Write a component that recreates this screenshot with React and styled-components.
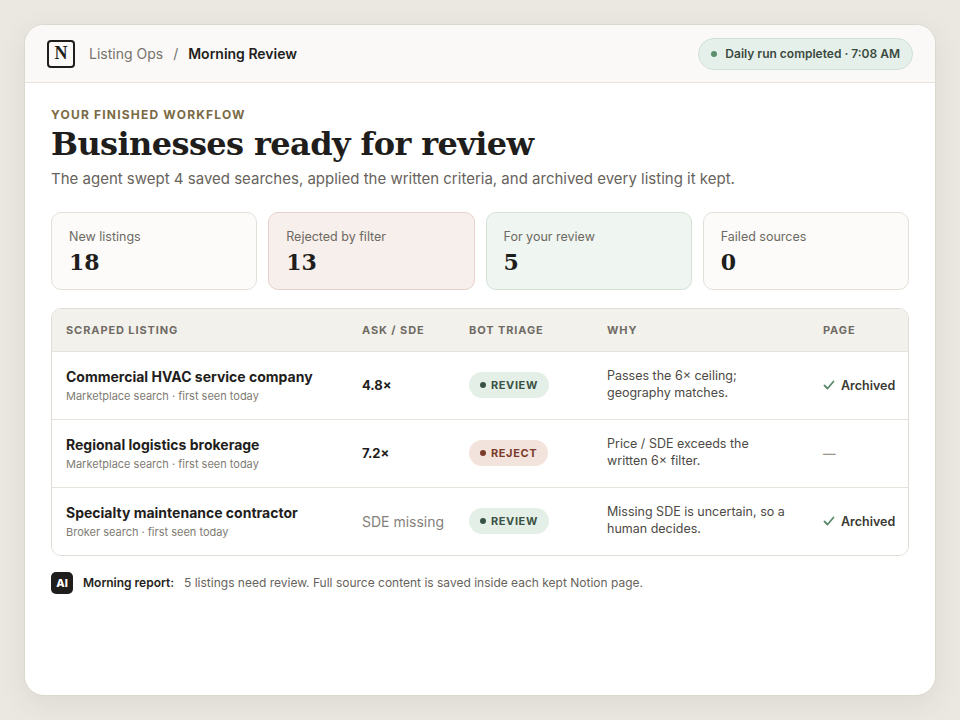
import React from "react";
import styled, { createGlobalStyle } from "styled-components";

const Global = createGlobalStyle`
  body {
    margin: 0;
    background: #ebe8e2;
    font-family: Inter, "Liberation Sans", sans-serif;
    color: #1f1e1c;
  }
`;

const Page = styled.div`
  width: 960px;
  height: 720px;
  padding: 24px;
  box-sizing: border-box;
`;

const Card = styled.div`
  background: #fff;
  border: 1px solid #dcd8d0;
  border-radius: 20px;
  height: 672px;
  box-sizing: border-box;
  overflow: hidden;
  box-shadow: 0 8px 30px rgba(60, 50, 30, 0.08);
`;

const TopBar = styled.div`
  height: 57px;
  display: flex;
  align-items: center;
  justify-content: space-between;
  padding: 0 22px;
  background: #faf9f7;
  border-bottom: 1px solid #e7e3dc;
`;

const Crumbs = styled.div`
  display: flex;
  align-items: center;
  gap: 10px;
  font-size: 14px;
  color: #77736c;
`;

const Logo = styled.div`
  width: 24px;
  height: 24px;
  margin-right: 4px;
  border: 2px solid #1f1e1c;
  border-radius: 4px;
  display: flex;
  align-items: center;
  justify-content: center;
  font-family: "Liberation Serif", serif;
  font-weight: 700;
  font-size: 18px;
  color: #1f1e1c;
`;

const Strong = styled.span`
  color: #1f1e1c;
  font-weight: 600;
`;

const StatusPill = styled.div`
  display: flex;
  align-items: center;
  gap: 8px;
  height: 30px;
  padding: 0 12px;
  border-radius: 16px;
  background: #e6f0ea;
  border: 1px solid #cfe0d4;
  font-size: 12px;
  font-weight: 600;
  color: #3b4a40;
`;

const Dot = styled.span`
  width: 6px;
  height: 6px;
  border-radius: 50%;
  background: ${(p) => p.color};
`;

const Body = styled.div`
  padding: 24px 26px 0 26px;
`;

const Eyebrow = styled.div`
  font-size: 12px;
  font-weight: 700;
  letter-spacing: 1.2px;
  color: #7a6a45;
`;

const Title = styled.h1`
  margin: 4px 0 0;
  font-family: "DejaVu Serif", "Liberation Serif", serif;
  font-weight: 700;
  font-size: 32px;
  letter-spacing: -0.6px;
  line-height: 1.15;
`;

const Sub = styled.p`
  margin: 6px 0 0;
  font-size: 15px;
  color: #67635c;
`;

const Stats = styled.div`
  display: grid;
  grid-template-columns: repeat(4, 1fr);
  gap: 11px;
  margin-top: 24px;
`;

const Stat = styled.div`
  height: 78px;
  box-sizing: border-box;
  border-radius: 10px;
  padding: 16px 17px;
  background: ${(p) => p.bg};
  border: 1px solid ${(p) => p.bd};
`;

const StatLabel = styled.div`
  font-size: 12.5px;
  color: #6d6962;
`;

const StatValue = styled.div`
  margin-top: 5px;
  font-family: "DejaVu Serif", "Liberation Serif", serif;
  font-weight: 700;
  font-size: 22px;
`;

const Table = styled.div`
  margin-top: 18px;
  border: 1px solid #e2ded7;
  border-radius: 10px;
  overflow: hidden;
`;

const Row = styled.div`
  display: grid;
  grid-template-columns: 296px 107px 138px 216px 1fr;
  align-items: center;
  padding-left: 14px;
  height: ${(p) => (p.head ? "42px" : "67px")};
  background: ${(p) => (p.head ? "#f3f1ec" : "#fff")};
  border-top: ${(p) => (p.first ? "none" : "1px solid #e7e3dc")};
`;

const Th = styled.div`
  font-size: 11px;
  font-weight: 700;
  letter-spacing: 0.9px;
  color: #6f6b64;
`;

const Name = styled.div`
  font-size: 14px;
  font-weight: 700;
`;

const Meta = styled.div`
  margin-top: 4px;
  font-size: 11px;
  color: #807b73;
`;

const Ratio = styled.div`
  font-size: ${(p) => (p.muted ? "14px" : "13px")};
  font-weight: ${(p) => (p.muted ? 400 : 700)};
  color: ${(p) => (p.muted ? "#85817a" : "#1f1e1c")};
`;

const Badge = styled.span`
  display: inline-flex;
  align-items: center;
  gap: 5px;
  height: 26px;
  padding: 0 11px;
  border-radius: 13px;
  font-size: 11px;
  font-weight: 700;
  letter-spacing: 0.6px;
  background: ${(p) => (p.reject ? "#f3e3dd" : "#e4efe7")};
  color: ${(p) => (p.reject ? "#7a3b2a" : "#3a5244")};
`;

const Why = styled.div`
  font-size: 12.5px;
  line-height: 1.35;
  color: #4d4a45;
  padding-right: 20px;
`;

const PageCell = styled.div`
  display: flex;
  align-items: center;
  gap: 6px;
  font-size: 12.5px;
  font-weight: 600;
  color: ${(p) => (p.muted ? "#9a958d" : "#3a3833")};
`;

const Report = styled.div`
  display: flex;
  align-items: center;
  gap: 10px;
  margin-top: 16px;
  font-size: 12px;
  color: #67635c;
`;

const AiChip = styled.span`
  width: 22px;
  height: 22px;
  border-radius: 5px;
  background: #1f1e1c;
  color: #fff;
  font-size: 11px;
  font-weight: 800;
  display: flex;
  align-items: center;
  justify-content: center;
`;

const Check = () => (
  <svg width="12" height="12" viewBox="0 0 12 12">
    <path d="M1.5 6.5l3 3 6-7" fill="none" stroke="#5b8a6a" strokeWidth="1.8" strokeLinecap="round" strokeLinejoin="round" />
  </svg>
);

const rows = [
  { name: "Commercial HVAC service company", meta: "Marketplace search · first seen today", ratio: "4.8×", reject: false, why: ["Passes the 6× ceiling;", "geography matches."], archived: true },
  { name: "Regional logistics brokerage", meta: "Marketplace search · first seen today", ratio: "7.2×", reject: true, why: ["Price / SDE exceeds the", "written 6× filter."], archived: false },
  { name: "Specialty maintenance contractor", meta: "Broker search · first seen today", ratio: "SDE missing", muted: true, reject: false, why: ["Missing SDE is uncertain, so a", "human decides."], archived: true },
];

export default function App() {
  return (
    <Page>
      <Global />
      <Card>
        <TopBar>
          <Crumbs>
            <Logo>N</Logo>
            <span>Listing Ops</span>
            <span>/</span>
            <Strong>Morning Review</Strong>
          </Crumbs>
          <StatusPill>
            <Dot color="#5d8f6c" />
            Daily run completed · 7:08 AM
          </StatusPill>
        </TopBar>
        <Body>
          <Eyebrow>YOUR FINISHED WORKFLOW</Eyebrow>
          <Title>Businesses ready for review</Title>
          <Sub>The agent swept 4 saved searches, applied the written criteria, and archived every listing it kept.</Sub>
          <Stats>
            <Stat bg="#fcfbf9" bd="#e4e0d9"><StatLabel>New listings</StatLabel><StatValue>18</StatValue></Stat>
            <Stat bg="#f7efeb" bd="#e6d2ca"><StatLabel>Rejected by filter</StatLabel><StatValue>13</StatValue></Stat>
            <Stat bg="#eff5f0" bd="#d3e2d7"><StatLabel>For your review</StatLabel><StatValue>5</StatValue></Stat>
            <Stat bg="#fcfbf9" bd="#e4e0d9"><StatLabel>Failed sources</StatLabel><StatValue>0</StatValue></Stat>
          </Stats>
          <Table>
            <Row head first>
              <Th>SCRAPED LISTING</Th>
              <Th>ASK / SDE</Th>
              <Th>BOT TRIAGE</Th>
              <Th>WHY</Th>
              <Th>PAGE</Th>
            </Row>
            {rows.map((r) => (
              <Row key={r.name}>
                <div>
                  <Name>{r.name}</Name>
                  <Meta>{r.meta}</Meta>
                </div>
                <Ratio muted={r.muted}>{r.ratio}</Ratio>
                <div>
                  <Badge reject={r.reject}>
                    <Dot color={r.reject ? "#7a3b2a" : "#3a5244"} />
                    {r.reject ? "REJECT" : "REVIEW"}
                  </Badge>
                </div>
                <Why>{r.why[0]}<br />{r.why[1]}</Why>
                {r.archived ? (
                  <PageCell><Check />Archived</PageCell>
                ) : (
                  <PageCell muted>—</PageCell>
                )}
              </Row>
            ))}
          </Table>
          <Report>
            <AiChip>AI</AiChip>
            <Strong>Morning report:</Strong>
            <span>5 listings need review. Full source content is saved inside each kept Notion page.</span>
          </Report>
        </Body>
      </Card>
    </Page>
  );
}
